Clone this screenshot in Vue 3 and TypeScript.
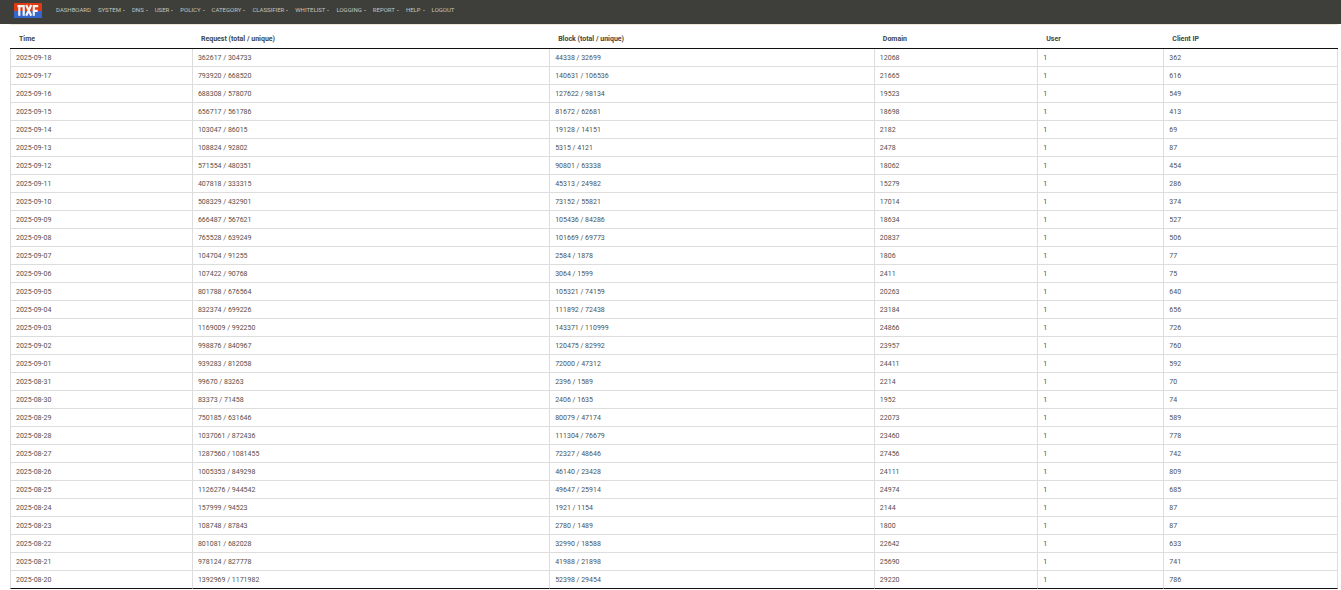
<script setup lang="ts">
interface NavItem {
  label: string
  menu: boolean
}

const nav: NavItem[] = [
  { label: 'DASHBOARD', menu: false },
  { label: 'SYSTEM', menu: true },
  { label: 'DNS', menu: true },
  { label: 'USER', menu: true },
  { label: 'POLICY', menu: true },
  { label: 'CATEGORY', menu: true },
  { label: 'CLASSIFIER', menu: true },
  { label: 'WHITELIST', menu: true },
  { label: 'LOGGING', menu: true },
  { label: 'REPORT', menu: true },
  { label: 'HELP', menu: true },
  { label: 'LOGOUT', menu: false },
]

const headers: string[] = [
  'Time',
  'Request (total / unique)',
  'Block (total / unique)',
  'Domain',
  'User',
  'Client IP',
]

const rows: (string | number)[][] = [
  ['2025-09-18', '362617 / 304733', '44338 / 32699', 12068, 1, 362],
  ['2025-09-17', '793920 / 668520', '140631 / 106536', 21665, 1, 616],
  ['2025-09-16', '688308 / 578070', '127622 / 98134', 19523, 1, 549],
  ['2025-09-15', '656717 / 561786', '81672 / 62681', 18698, 1, 413],
  ['2025-09-14', '103047 / 86015', '19128 / 14151', 2182, 1, 69],
  ['2025-09-13', '108824 / 92802', '5315 / 4121', 2478, 1, 87],
  ['2025-09-12', '571554 / 480351', '90801 / 63338', 18062, 1, 454],
  ['2025-09-11', '407818 / 333315', '45313 / 24982', 15279, 1, 286],
  ['2025-09-10', '508329 / 432901', '73152 / 55821', 17014, 1, 374],
  ['2025-09-09', '666487 / 567621', '105436 / 84286', 18634, 1, 527],
  ['2025-09-08', '765528 / 639249', '101669 / 69773', 20837, 1, 506],
  ['2025-09-07', '104704 / 91255', '2584 / 1878', 1806, 1, 77],
  ['2025-09-06', '107422 / 90768', '3064 / 1599', 2411, 1, 75],
  ['2025-09-05', '801788 / 676564', '105321 / 74159', 20263, 1, 640],
  ['2025-09-04', '832374 / 699226', '111892 / 72438', 23184, 1, 656],
  ['2025-09-03', '1169009 / 992250', '143371 / 110999', 24866, 1, 726],
  ['2025-09-02', '998876 / 840967', '120475 / 82992', 23957, 1, 760],
  ['2025-09-01', '939283 / 812058', '72000 / 47312', 24411, 1, 592],
  ['2025-08-31', '99670 / 83263', '2396 / 1589', 2214, 1, 70],
  ['2025-08-30', '83373 / 71458', '2406 / 1635', 1952, 1, 74],
  ['2025-08-29', '750185 / 631646', '80079 / 47174', 22073, 1, 589],
  ['2025-08-28', '1037061 / 872436', '111304 / 76679', 23460, 1, 778],
  ['2025-08-27', '1287560 / 1081455', '72327 / 48646', 27456, 1, 742],
  ['2025-08-26', '1005353 / 849298', '46140 / 23428', 24111, 1, 809],
  ['2025-08-25', '1126276 / 944542', '49647 / 25914', 24974, 1, 685],
  ['2025-08-24', '157999 / 94523', '1921 / 1154', 2144, 1, 87],
  ['2025-08-23', '108748 / 87843', '2780 / 1489', 1800, 1, 87],
  ['2025-08-22', '801081 / 682028', '32990 / 18588', 22642, 1, 633],
  ['2025-08-21', '978124 / 827778', '41988 / 21898', 25690, 1, 741],
  ['2025-08-20', '1392969 / 1171982', '52398 / 29454', 29220, 1, 786],
]
</script>

<template>
  <div class="page">
    <header class="bar">
      <a class="logo" href="#" aria-label="NXF home">
        <svg viewBox="0 0 28 15" width="28" height="15" aria-hidden="true">
          <rect width="28" height="8" fill="#e03a10" />
          <rect y="8" width="28" height="7" fill="#3566cc" />
          <g fill="none" stroke="#f6f3f4" stroke-width="2.2">
            <path d="M3.500 3.200H10M5.300 3V12.800M9.700 2.100V12.800" />
            <path d="M12.200 2L17.200 12.800M17.200 2L12.200 12.800" />
            <path d="M19.800 12.800V3.200H24.200M19.800 7.800H23.700" />
          </g>
        </svg>
      </a>
      <nav class="menu" aria-label="Main">
        <a v-for="item in nav" :key="item.label" class="item" href="#">
          {{ item.label }}<span v-if="item.menu" class="caret"></span>
        </a>
      </nav>
    </header>

    <main class="content">
      <table class="stats">
        <colgroup>
          <col class="c-time" />
          <col class="c-request" />
          <col class="c-block" />
          <col class="c-domain" />
          <col class="c-user" />
          <col class="c-client" />
        </colgroup>
        <thead>
          <tr>
            <th v-for="h in headers" :key="h" scope="col">{{ h }}</th>
          </tr>
        </thead>
        <tbody>
          <tr v-for="row in rows" :key="row[0]">
            <td v-for="(cell, i) in row" :key="i">{{ cell }}</td>
          </tr>
        </tbody>
      </table>
    </main>
  </div>
</template>

<style>
body {
  margin: 0;
  background: #fff;
}
</style>

<style scoped>
.page {
  font-family: Roboto, "Liberation Sans", sans-serif;
  font-size: 7px;
  color: #444;
}
.bar {
  display: flex;
  align-items: center;
  height: 24px;
  padding-left: 14px;
  background: #3e3f3a;
}
.logo {
  display: block;
  height: 15px;
  margin-top: -3px;
}
.logo svg {
  display: block;
}
.menu {
  display: flex;
  gap: 7px;
  margin: -4px 0 0 14px;
}
.item {
  display: flex;
  align-items: center;
  font-size: 6px;
  font-weight: 400;
  line-height: 8px;
  color: #c4c4be;
  text-decoration: none;
  white-space: nowrap;
}
.caret {
  width: 2px;
  height: 1px;
  margin-left: 2px;
  background: #85857f;
}
.content {
  margin: 0 3px 0 10px;
  border-top: 1px solid #efe6d8;
}
.stats {
  width: 100%;
  table-layout: fixed;
  border-collapse: separate;
  border-spacing: 0;
}
.c-time { width: 13.7%; }
.c-request { width: 26.9%; }
.c-block { width: 24.45%; }
.c-domain { width: 12.3%; }
.c-user { width: 9.5%; }
.c-client { width: 13.15%; }
th {
  box-sizing: border-box;
  height: 24px;
  padding: 4px 9px 0;
  border-bottom: 1px solid #111;
  font-weight: 700;
  line-height: 10px;
  text-align: left;
  vertical-align: middle;
}
td {
  box-sizing: border-box;
  height: 18px;
  padding: 0 5px;
  border-left: 1px solid #ddd;
  border-bottom: 1px solid #ddd;
  line-height: 10px;
  color: #505050;
  vertical-align: middle;
}
td:last-child {
  border-right: 1px solid #ddd;
}
tbody tr:last-child td {
  border-bottom-color: #111;
}
</style>
